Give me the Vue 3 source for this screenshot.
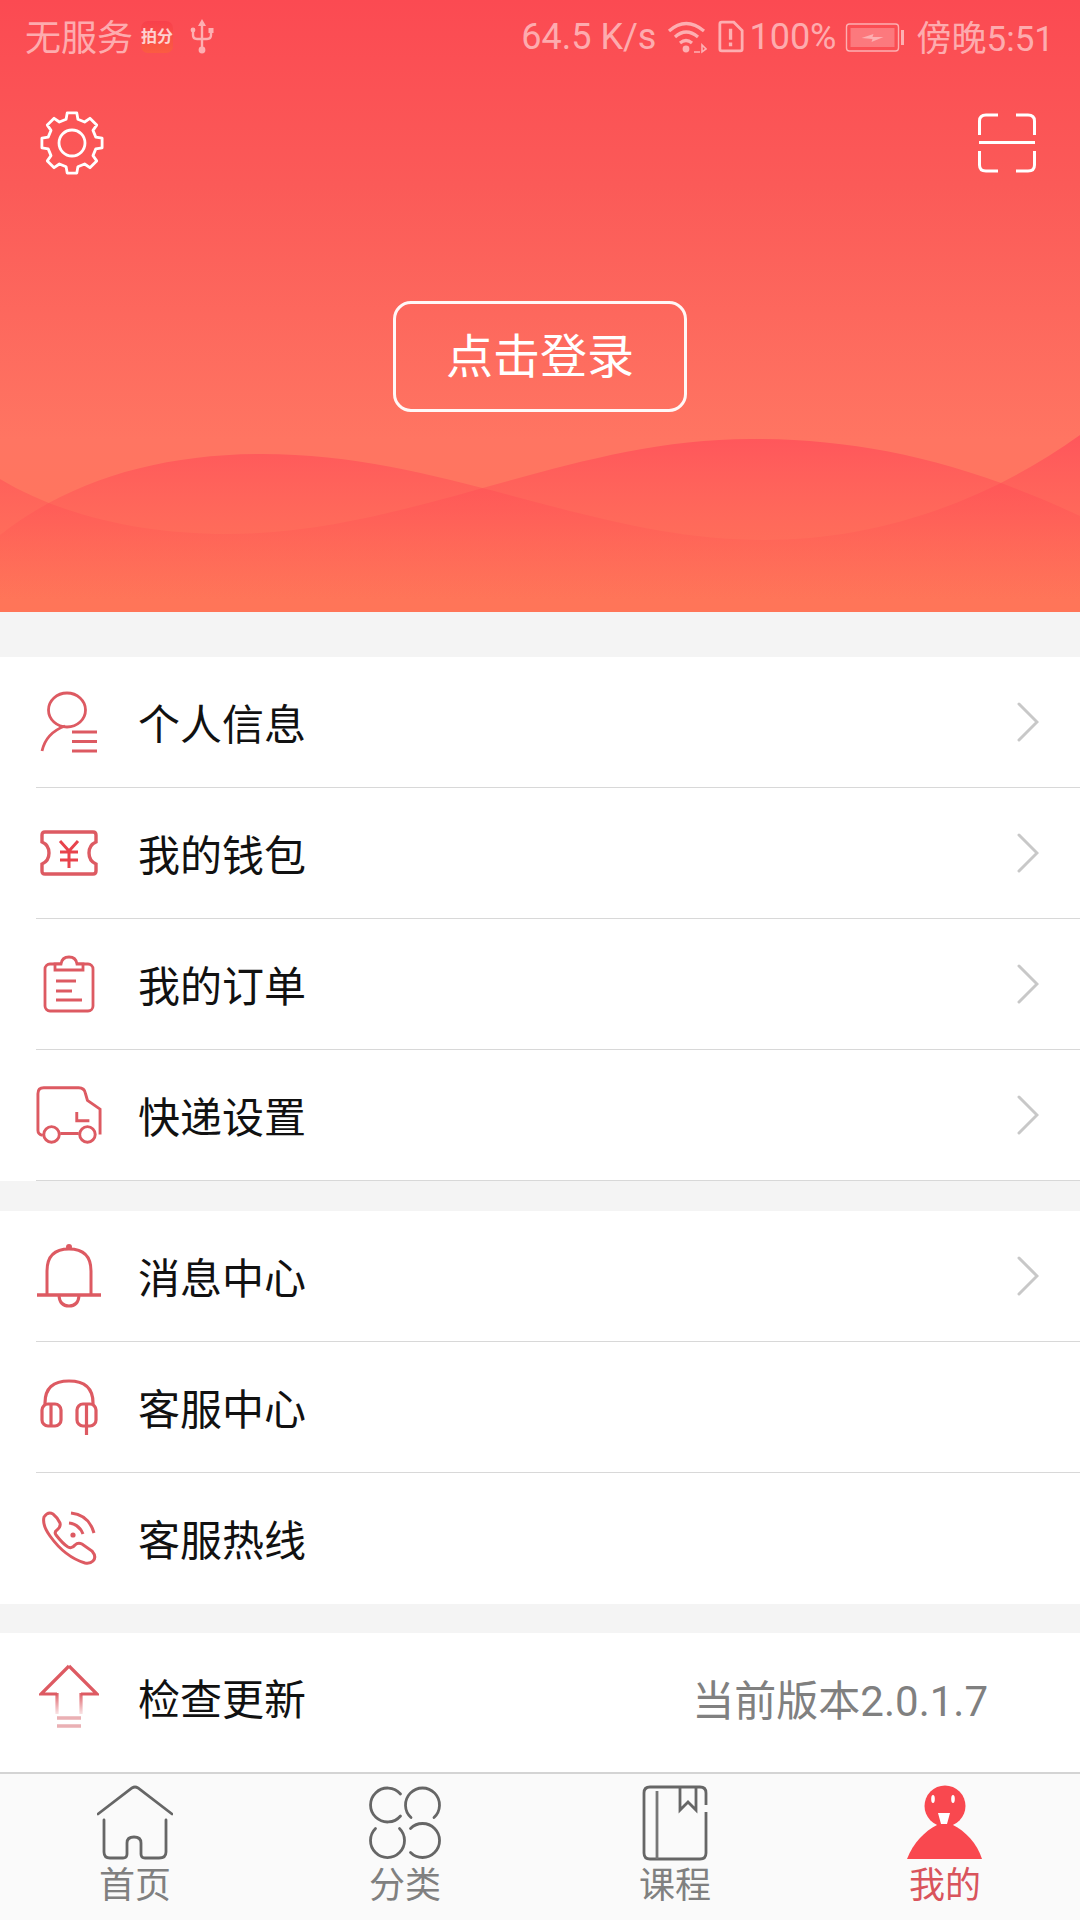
<script setup>
const groupOne = [
  { label: '个人信息', icon: 'user', arrow: true },
  { label: '我的钱包', icon: 'ticket', arrow: true },
  { label: '我的订单', icon: 'order', arrow: true },
  { label: '快递设置', icon: 'truck', arrow: true }
]
const groupTwo = [
  { label: '消息中心', icon: 'bell', arrow: true },
  { label: '客服中心', icon: 'headset', arrow: false },
  { label: '客服热线', icon: 'phone', arrow: false }
]

// 8 tooth gear outline
const gearPoints = []
for (let k = 0; k < 8; k++) {
  const base = (k * Math.PI) / 4 - Math.PI / 2
  for (const [r, a] of [[24.5, -14], [30.5, -9], [30.5, 9], [24.5, 14]]) {
    const t = base + (a * Math.PI) / 180
    gearPoints.push(`${(33 + r * Math.cos(t)).toFixed(1)},${(33 + r * Math.sin(t)).toFixed(1)}`)
  }
}
const gear = gearPoints.join(' ')
</script>

<template>
  <div class="page">
    <header class="hero">
      <svg class="waves" width="1080" height="612" viewBox="0 0 1080 612">
        <defs>
          <linearGradient id="waveFill" x1="0" y1="430" x2="0" y2="600" gradientUnits="userSpaceOnUse">
            <stop offset="0" stop-color="#ff4558" stop-opacity="0.68" />
            <stop offset="1" stop-color="#ff5a50" stop-opacity="0" />
          </linearGradient>
        </defs>
        <path fill="url(#waveFill)" d="M0 535C70 480 160 454 262 454C446 454 590 540 764 540C880 540 990 500 1080 435V612H0Z" />
        <path fill="url(#waveFill)" d="M0 479C60 515 140 534 227 534C410 534 566 439 751 439C860 439 960 460 1080 516V612H0Z" />
      </svg>

      <div class="status">
        <div class="status-left">
          <span class="carrier">无服务</span>
          <span class="app-badge">拍分</span>
          <svg class="usb" width="24" height="36" viewBox="0 0 24 36" fill="none" stroke="#fff" stroke-width="2.4">
            <path d="M12 5V31M3 12V16Q3 20 7 20H17Q21 20 21 16V13" />
            <path d="M12 0L16 7H8Z" fill="#fff" stroke="none" />
            <circle cx="12" cy="31" r="3.4" fill="#fff" stroke="none" />
            <circle cx="3" cy="11" r="2.4" fill="#fff" stroke="none" />
            <rect x="18.5" y="9" width="5" height="5" fill="#fff" stroke="none" />
          </svg>
        </div>
        <div class="status-right">
          <span class="speed">64.5 K/s</span>
          <svg width="40" height="36" viewBox="0 0 40 36" fill="none" stroke="#fff" stroke-width="3.2">
            <path d="M2 12Q19 -3 37 12M8 18Q19 8 31 18M13 24Q19 19 25 24" />
            <circle cx="19" cy="30" r="3.4" fill="#fff" stroke="none" />
            <path d="M27 33H33M35 26V33L39 30Z" stroke-width="1.6" />
          </svg>
          <svg class="sim" width="26" height="36" viewBox="0 0 28 36" fill="none" stroke="#fff" stroke-width="3">
            <path d="M4 2H17L26 11V31Q26 33 24 33H4Q2 33 2 31V4Q2 2 4 2Z" />
            <path d="M13.5 9V21M13.5 24V28" stroke-width="3.6" />
          </svg>
          <span class="pct">100%</span>
          <svg width="61" height="36" viewBox="0 0 60 36" fill="none">
            <rect x="1" y="5" width="52" height="27" rx="3" stroke="#fff" stroke-width="1.4" />
            <rect x="5" y="9" width="44" height="19" fill="#fff" fill-opacity="0.45" />
            <path d="M16 19L28 15L27 18L38 18L26 23L27 20Z" fill="#fff" />
            <rect x="55.5" y="11" width="3" height="15" fill="#fff" />
          </svg>
          <span class="clock">傍晚5:51</span>
        </div>
      </div>

      <div class="toolbar">
        <svg width="66" height="66" viewBox="0 0 66 66" fill="none" stroke="#fff" stroke-width="2.8" stroke-linejoin="round">
          <circle cx="33" cy="33" r="13" />
          <polygon :points="gear" />
        </svg>
        <svg width="58" height="60" viewBox="0 0 58 60" fill="none" stroke="#fff" stroke-width="3">
          <path d="M1.5 22V8Q1.5 2 8 2H20M38 2H50Q56.5 2 56.5 8V22" />
          <path d="M1 29.5H57" />
          <path d="M1.5 38V52Q1.5 58 8 58H20M38 58H50Q56.5 58 56.5 52V38" />
        </svg>
      </div>

      <div class="login-wrap">
        <button class="login">点击登录</button>
      </div>
    </header>

    <section class="group">
      <div v-for="row in groupOne" :key="row.label" class="row">
        <span class="row-icon">
          <svg v-if="row.icon === 'user'" width="58" height="62" viewBox="0 0 58 62" fill="none" stroke="#dd5a62" stroke-width="2.8">
            <ellipse cx="27" cy="19" rx="18.5" ry="17" />
            <path d="M2 60Q6 42 25 35" />
            <path d="M32 41H57M32 50.5H57M32 60H57" />
          </svg>
          <svg v-else-if="row.icon === 'ticket'" width="58" height="46" viewBox="0 0 58 46" fill="none" stroke="#dd5a62" stroke-width="3.4">
            <path d="M5 2H53Q56 2 56 5V12Q49 15 49 23Q49 31 56 34V41Q56 44 53 44H5Q2 44 2 41V34Q9 31 9 23Q9 15 2 12V5Q2 2 5 2Z" />
            <path d="M20 11L29 21L38 11M20 22H38M20 30H38M29 21V38" stroke="#e8434c" stroke-width="3" />
          </svg>
          <svg v-else-if="row.icon === 'order'" width="52" height="58" viewBox="0 0 52 58" fill="none" stroke="#dd5a62" stroke-width="2.8">
            <rect x="2" y="9" width="48" height="47" rx="5" />
            <path d="M12 15V9H18Q19 2 26 2Q33 2 34 9H40V15Z" fill="#fff" />
            <path d="M13 26H33M13 36H29M13 45H39" />
          </svg>
          <svg v-else width="68" height="60" viewBox="0 0 68 60" fill="none" stroke="#dd5a62" stroke-width="3">
            <path d="M7 51Q2 50 2 46V8Q2 2 8 2H44Q50 2 51 8L53 15L66 24V50" />
            <path d="M42 27V36H55M25 49H44" />
            <circle cx="16" cy="50" r="8" />
            <circle cx="53" cy="50" r="8" />
          </svg>
        </span>
        <span class="row-label">{{ row.label }}</span>
        <svg v-if="row.arrow" class="chevron" width="22" height="40" viewBox="0 0 22 40" fill="none" stroke="#c8c8c8" stroke-width="3" stroke-linecap="round">
          <path d="M2 2L20 20L2 38" />
        </svg>
      </div>
    </section>

    <section class="group group-tight">
      <div v-for="row in groupTwo" :key="row.label" class="row">
        <span class="row-icon">
          <svg v-if="row.icon === 'bell'" width="66" height="66" viewBox="0 0 66 66" fill="none" stroke="#dd5a62" stroke-width="3">
            <path d="M11 52V28Q11 6 33 6Q55 6 55 28V52" />
            <path d="M1 52H65" stroke-width="3.6" />
            <path d="M23 53Q24 63 33 63Q42 63 43 53" />
            <circle cx="33" cy="4" r="3" fill="#dd5a62" stroke="none" />
          </svg>
          <svg v-else-if="row.icon === 'headset'" width="58" height="56" viewBox="0 0 58 56" fill="none" stroke="#dd5a62" stroke-width="3.2">
            <path d="M5 26V24Q5 2 29 2Q53 2 53 24V26" />
            <rect x="2" y="25" width="19" height="22" rx="6" />
            <rect x="37" y="25" width="19" height="22" rx="6" />
            <path d="M11 26V46M46.5 26V56" />
          </svg>
          <svg v-else width="56" height="56" viewBox="0 0 56 56" fill="none" stroke="#dd5a62" stroke-width="3">
            <path d="M3 6Q7 0 12 3Q16 6 19 12Q20 16 16 19Q13 21 15 24Q22 33 27 36Q31 38 34 34Q37 31 41 33L51 40Q56 46 52 50Q49 53 44 52Q24 46 9 25Q1 14 3 6Z" />
            <path d="M30 2Q48 4 53 22M28 12Q38 13 42 23" />
            <circle cx="32" cy="24" r="2.6" fill="#dd5a62" stroke="none" />
          </svg>
        </span>
        <span class="row-label">{{ row.label }}</span>
        <svg v-if="row.arrow" class="chevron" width="22" height="40" viewBox="0 0 22 40" fill="none" stroke="#c8c8c8" stroke-width="3" stroke-linecap="round">
          <path d="M2 2L20 20L2 38" />
        </svg>
      </div>
    </section>

    <section class="group group-last">
      <div class="row">
        <span class="row-icon">
          <svg width="60" height="66" viewBox="0 0 60 66" fill="none" stroke-width="3.2">
            <defs>
              <linearGradient id="arrowFade" x1="0" y1="28" x2="0" y2="52" gradientUnits="userSpaceOnUse">
                <stop offset="0" stop-color="#dd5a62" />
                <stop offset="1" stop-color="#dd5a62" stop-opacity="0.1" />
              </linearGradient>
            </defs>
            <path stroke="#dd5a62" d="M30 2L2 30H18M42 30H58L30 2" />
            <path stroke="url(#arrowFade)" d="M18 29V50M42 29V50" />
            <path stroke="#eab0b4" stroke-width="3.6" d="M18 54H42M18 62H42" />
          </svg>
        </span>
        <span class="row-label">检查更新</span>
        <span class="version">当前版本2.0.1.7</span>
      </div>
    </section>

    <nav class="tabs">
      <div class="tab">
        <svg width="76" height="76" viewBox="0 0 76 76" fill="none" stroke="#666" stroke-width="2.8" stroke-linecap="round">
          <path d="M1 29L35 3Q38 1 41 3L75 29" />
          <path d="M7 35V67Q7 73 13 73H26Q30 73 30 69V58Q30 52 37 52Q44 52 44 58V69Q44 73 48 73H62Q69 73 69 67V35" />
        </svg>
        <span>首页</span>
      </div>
      <div class="tab">
        <svg width="74" height="76" viewBox="0 0 74 76" fill="none" stroke="#666" stroke-width="2.8" stroke-linecap="round">
          <g transform="translate(1 2)">
            <path d="M31.5 7A17 17 0 1 0 31.5 29" />
            <path d="M42 30.5A17 17 0 1 1 65 30.5" />
            <path d="M6.5 41.5A17 17 0 1 0 30.5 41.5" />
            <path d="M41.5 41.5A17 17 0 1 1 41.5 65.5" />
          </g>
        </svg>
        <span>分类</span>
      </div>
      <div class="tab">
        <svg width="66" height="76" viewBox="0 0 66 76" fill="none" stroke="#666" stroke-width="2.8">
          <path d="M64 20V8Q64 2 58 2H8Q2 2 2 8V68Q2 74 8 74H58Q64 74 64 68V27" />
          <path d="M15 6V74" stroke="#777" />
          <path d="M38 2V25L46 17L54 25V2" />
        </svg>
        <span>课程</span>
      </div>
      <div class="tab tab-active">
        <svg width="76" height="76" viewBox="0 0 76 76">
          <circle cx="38" cy="21" r="20.5" fill="#f9484f" />
          <path fill="#f9484f" d="M0 74C6 58 18 46 30 40H46C58 46 70 58 75 74Z" />
          <ellipse cx="26" cy="14" rx="1.8" ry="4" fill="#fff" />
          <ellipse cx="46" cy="14" rx="1.8" ry="4" fill="#fff" />
          <path d="M31 28H43L40 39H34Z" fill="#fff" />
        </svg>
        <span>我的</span>
      </div>
    </nav>
  </div>
</template>

<style scoped>
.page {
  width: 1080px;
  height: 1920px;
  overflow: hidden;
  display: flex;
  flex-direction: column;
  background: #f4f4f4;
  font-family: "Noto Sans CJK SC", "Noto Sans", sans-serif;
}
.hero {
  position: relative;
  height: 612px;
  flex: none;
  background: linear-gradient(180deg, #fb4a52 0%, #fb5a58 30%, #ff7562 72%, #ff7558 100%);
}
.waves {
  position: absolute;
  left: 0;
  top: 0;
}
.status {
  position: relative;
  height: 74px;
  padding: 0 26px 0 25px;
  display: flex;
  align-items: center;
  justify-content: space-between;
  font-size: 36px;
  color: rgba(255, 255, 255, 0.55);
  font-family: Roboto, "Noto Sans CJK SC", sans-serif;
}
.status-left,
.status-right {
  display: flex;
  align-items: center;
}
.status-left svg,
.status-right svg {
  opacity: 0.55;
  flex: none;
}
.carrier {
  margin-bottom: 4px;
}
.app-badge {
  width: 32px;
  height: 32px;
  margin-left: 8px;
  border-radius: 7px;
  background: linear-gradient(180deg, #f8404c, #fb5c42);
  color: rgba(255, 255, 255, 0.75);
  font-size: 16px;
  font-weight: 700;
  line-height: 32px;
  text-align: center;
  white-space: nowrap;
}
.usb {
  margin-left: 17px;
}
.speed {
  margin-right: 11px;
}
.sim {
  margin-left: 11px;
  margin-right: 5px;
}
.pct {
  margin-right: 8px;
}
.clock {
  margin-left: 11px;
  margin-bottom: 4px;
  font-size: 35px;
}
.toolbar {
  position: relative;
  display: flex;
  align-items: center;
  justify-content: space-between;
  padding: 36px 44px 0 39px;
}
.login-wrap {
  position: relative;
  display: flex;
  justify-content: center;
  padding-top: 125px;
}
.login {
  width: 294px;
  height: 111px;
  box-sizing: border-box;
  border: 3px solid rgba(255, 255, 255, 0.95);
  border-radius: 18px;
  background: transparent;
  color: #fff;
  font-family: inherit;
  font-size: 47px;
  padding: 0 0 8px;
}
.group {
  margin-top: 45px;
  background: #fff;
  flex: none;
}
.group-tight {
  margin-top: 30px;
}
.group-last {
  flex: 1;
  margin-top: 29px;
}
.row {
  height: 131px;
  box-sizing: border-box;
  margin-left: 36px;
  padding-right: 41px;
  display: flex;
  align-items: center;
  border-bottom: 1px solid #d8d8d8;
}
.group-last .row,
.group-tight .row:last-child {
  border-bottom: none;
}
.group-last .row {
  height: 128px;
}
.row-icon {
  width: 66px;
  flex: none;
  margin-right: 36px;
  display: flex;
  justify-content: center;
}
.row-label {
  flex: 1;
  font-size: 42px;
  color: #111;
  padding-bottom: 2px;
}
.chevron {
  flex: none;
}
.version {
  font-size: 42px;
  color: #808080;
  margin-right: 51px;
  font-family: Roboto, "Noto Sans CJK SC", sans-serif;
}
.tabs {
  height: 148px;
  flex: none;
  box-sizing: border-box;
  border-top: 2px solid #d4d4d4;
  background: #fafafa;
  display: flex;
}
.tab {
  flex: 1;
  display: flex;
  flex-direction: column;
  align-items: center;
  padding-top: 11px;
  font-size: 36px;
  line-height: 46px;
  color: #808080;
}
.tab span {
  margin-top: -2px;
}
.tab-active {
  color: #d9545c;
}
</style>
